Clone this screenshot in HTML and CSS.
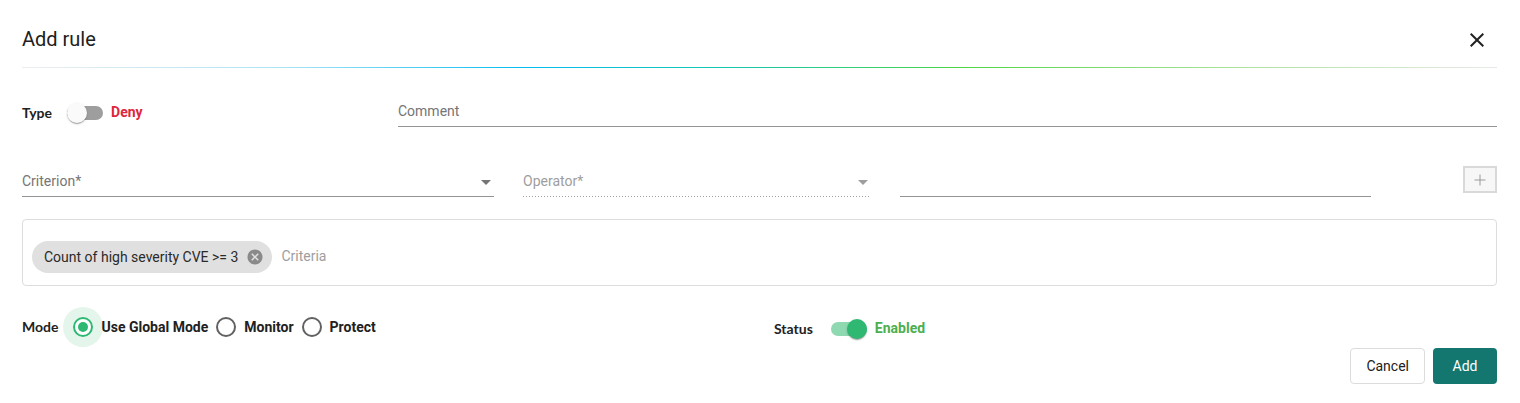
FILE: index.html
```html
<!DOCTYPE html>
<html lang="en">
<head>
<meta charset="utf-8">
<title>Add rule</title>
<link rel="stylesheet" href="styles.css">
</head>
<body>
<div class="dialog">
  <header class="head">
    <h2 class="title">Add rule</h2>
    <button class="close" aria-label="Close">
      <svg width="24" height="24" viewBox="0 0 24 24"><path d="M19 6.41 17.59 5 12 10.59 6.41 5 5 6.41 10.59 12 5 17.59 6.41 19 12 13.41 17.59 19 19 17.59 13.41 12z" fill="#212121"/></svg>
    </button>
  </header>
  <div class="divider"></div>

  <div class="row row-type">
    <div class="type-group">
      <span class="label">Type</span>
      <span class="toggle off"><span class="track"></span><span class="thumb"></span></span>
      <span class="deny">Deny</span>
    </div>
    <div class="field comment">Comment</div>
  </div>

  <div class="row row-crit">
    <div class="field select criterion"><span>Criterion*</span><span class="arrow"></span></div>
    <div class="field select operator disabled"><span>Operator*</span><span class="arrow"></span></div>
    <div class="field value"></div>
    <button class="plus" aria-label="Add criterion">
      <svg width="12" height="12" viewBox="0 0 12 12"><path d="M6 0.5v11M0.5 6h11" stroke="#9a9a9a" stroke-width="1"/></svg>
    </button>
  </div>

  <div class="chips">
    <span class="chip">Count of high severity CVE &gt;= 3
      <svg class="chip-x" width="18" height="18" viewBox="0 0 24 24"><path d="M12 2C6.47 2 2 6.470 2 12s4.47 10 10 10 10-4.47 10-10S17.53 2 12 2zm5 13.59L15.59 17 12 13.41 8.41 17 7 15.590 10.59 12 7 8.41 8.41 7 12 10.59 15.59 7 17 8.41 13.41 12 17 15.59z" fill="#8a8a8a"/></svg>
    </span>
    <span class="chip-input">Criteria</span>
  </div>

  <div class="row row-mode">
    <div class="mode-col">
      <span class="label">Mode</span>
      <div class="radios">
        <label class="radio checked"><span class="circle"><span class="dot"></span></span><span class="rlabel">Use Global Mode</span></label>
        <label class="radio"><span class="circle"></span><span class="rlabel">Monitor</span></label>
        <label class="radio"><span class="circle"></span><span class="rlabel">Protect</span></label>
      </div>
    </div>
    <div class="status-col">
      <span class="label">Status</span>
      <span class="toggle on"><span class="track"></span><span class="thumb"></span></span>
      <span class="enabled">Enabled</span>
    </div>
  </div>

  <div class="actions">
    <button class="btn cancel">Cancel</button>
    <button class="btn add">Add</button>
  </div>
</div>
</body>
</html>
```

FILE: styles.css
```css
* { box-sizing: border-box; }
html, body { margin: 0; padding: 0; background: #fff; }
body { font-family: Roboto, "Liberation Sans", sans-serif; color: #212121; }

.dialog { width: 1520px; height: 403px; padding: 0 23px 0 22px; }

.head { display: flex; justify-content: space-between; align-items: flex-start; height: 67px; padding-top: 27px; }
.title { margin: 0; font-size: 20px; line-height: 24px; font-weight: 400; color: #212121; }
.close { border: 0; background: none; padding: 0; margin: 1px 8px 0 0; width: 24px; height: 24px; display: flex; }

.divider { height: 1px; background: linear-gradient(to right, #eeeeee 0%, #a8e3f6 18%, #00bcf2 34%, #1cc8a2 50%, #4fd643 64%, #a9e29a 82%, #e9e9e9 100%); }

.row { display: flex; }
.label { font-family: Lato, "Liberation Sans", sans-serif; font-weight: 700; font-size: 14px; line-height: 16px; color: #222; }

.row-type { margin-top: 35px; align-items: flex-start; }
.type-group { width: 376px; display: flex; align-items: center; height: 16px; margin-top: 2px; }
.type-group .label { margin-right: 15px; }

.toggle { position: relative; width: 36px; height: 20px; display: inline-flex; align-items: center; }
.toggle .track { width: 36px; height: 14px; border-radius: 7px; background: #9e9e9e; }
.toggle .thumb { position: absolute; top: 0; left: 0; width: 20px; height: 20px; border-radius: 50%; background: #fafafa; box-shadow: 0 2px 1px -1px rgba(0,0,0,.2), 0 1px 1px 0 rgba(0,0,0,.14), 0 1px 3px 0 rgba(0,0,0,.12); }
.toggle.on .track { background: #8ed9b1; }
.toggle.on .thumb { left: 16px; background: #2eb872; }

.deny { margin-left: 8px; color: #e0263c; font-weight: 700; font-size: 14px; line-height: 16px; margin-top: -2px; }

.field { font-size: 14px; line-height: 16px; color: #757575; padding-bottom: 7px; border-bottom: 1px solid #949494; height: 24px; }
.comment { flex: 1; }

.row-crit { margin-top: 46px; align-items: flex-start; }
.select { display: flex; justify-content: space-between; align-items: center; }
.arrow { width: 0; height: 0; border-left: 5px solid transparent; border-right: 5px solid transparent; border-top: 5px solid #757575; margin: 2px 3px 0 0; }
.criterion { width: 472px; }
.operator { width: 346px; margin-left: 29px; }
.operator.disabled { color: #9e9e9e; border-bottom: 0; padding-bottom: 8px; background: linear-gradient(to right, #a0a0a0 34%, transparent 0) left bottom / 3px 1px repeat-x; }
.operator .arrow { border-top-color: #9e9e9e; margin-right: 1px; }
.value { width: 471px; margin-left: 31px; }
.plus { margin-left: auto; margin-top: -7px; width: 34px; height: 27px; border: 2px solid #d9d9d9; background: #f7f7f7; padding: 0; display: flex; align-items: center; justify-content: center; }

.chips { margin-top: 22px; height: 67px; border: 1px solid #dddddd; border-radius: 4px; padding: 21px 10px 0 9px; display: flex; align-items: flex-start; }
.chip { display: inline-flex; align-items: center; height: 32px; border-radius: 16px; background: #e0e0e0; padding: 0 8px 0 12px; font-size: 14px; line-height: 16px; color: #2a2a2a; }
.chip-x { margin-left: 8px; }
.chip-input { margin-left: 9px; font-size: 14px; line-height: 31px; color: #9e9e9e; }

.row-mode { margin-top: 21px; height: 40px; align-items: center; }
.mode-col { width: 752px; display: flex; align-items: center; }
.mode-col .label { margin-right: 15px; }
.radios { display: flex; align-items: center; gap: 8px; }
.radio { display: flex; align-items: center; font-weight: 700; font-size: 14px; line-height: 16px; color: #212121; margin-top: -1px; }
.circle { width: 20px; height: 20px; border: 2px solid #616161; border-radius: 50%; display: flex; align-items: center; justify-content: center; }
.radio.checked .circle { border-color: #2eb872; box-shadow: 0 0 0 10px #e4f6ec; }
.dot { width: 10px; height: 10px; border-radius: 50%; background: #2eb872; }
.rlabel { margin-left: 8px; }

.status-col { display: flex; align-items: center; padding-top: 3px; }
.status-col .label { margin-right: 18px; }
.enabled { margin-left: 8px; color: #4caf50; font-weight: 700; font-size: 14px; line-height: 16px; margin-top: -2px; }

.actions { display: flex; justify-content: flex-end; gap: 8px; margin-top: 1px; }
.btn { height: 36px; border-radius: 4px; font-family: Roboto, "Liberation Sans", sans-serif; font-size: 14px; padding: 0 15px; min-width: 64px; }
.cancel { background: #fff; border: 1px solid #dcdcdc; color: #212121; }
.add { background: #13776f; border: 0; color: #fff; }
```
